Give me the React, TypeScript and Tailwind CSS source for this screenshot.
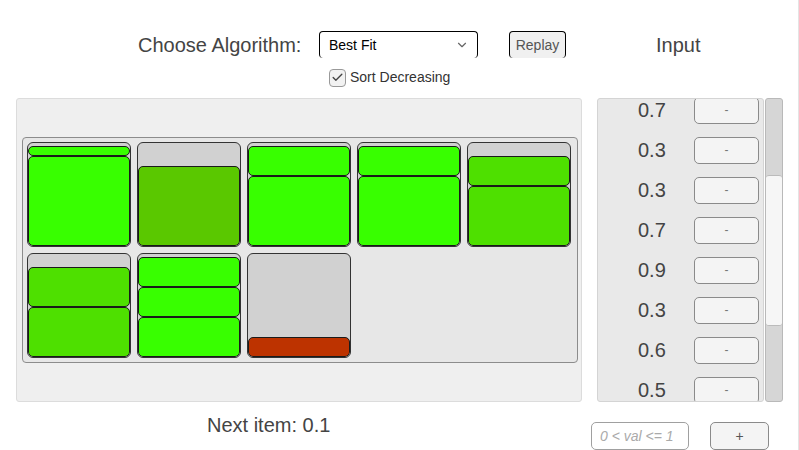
import React from 'react';
import { ChevronDown, Check } from 'lucide-react';

type Bin = number[];

const bins: Bin[] = [
    [0.9, 0.1],
    [0.8],
    [0.7, 0.3],
    [0.7, 0.3],
    [0.6, 0.3],
    [0.5, 0.4],
    [0.4, 0.3, 0.3],
    [0.2],
];

const inputs = [0.7, 0.3, 0.3, 0.7, 0.9, 0.3, 0.6, 0.5];

// colour of a bin's items depends on how full it is
const fillColor = (total: number) => {
    if (total >= 0.99) return 'bg-[#38ff00]';
    if (total >= 0.89) return 'bg-[#4ee000]';
    if (total >= 0.79) return 'bg-[#5ac800]';
    return 'bg-[#bd3300]';
};

const BinView: React.FC<{ items: Bin }> = ({ items }) => {
    const total = items.reduce((a, b) => a + b, 0);
    const color = fillColor(total);
    return (
        <div className="h-[105px] w-[104px] rounded-[6px] border border-[#333] bg-[#d1d1d1] flex flex-col-reverse overflow-hidden">
            {items.map((v, i) => (
                <div
                    key={i}
                    className={`${color} w-full rounded-[5px] border border-[#1a1a1a]`}
                    style={{ height: `${Math.round(v * 100)}px` }}
                />
            ))}
        </div>
    );
};

export default function App() {
    return (
        <div className="w-[799px] h-[450px] bg-white overflow-hidden text-[#444] border-r border-[#e4e4e4]" style={{ fontFamily: '"Liberation Sans", Arial, sans-serif' }}>
            {/* header */}
            <div className="flex items-start pt-[31px] h-[98px]">
                <div className="ml-[138px] w-[181px] h-[27px] flex items-center text-[20px] text-[#444]">Choose Algorithm:</div>
                <div className="flex flex-col">
                    <div className="w-[159px] h-[27px] rounded-[4px] border-x border-t border-black border-b-white flex items-center justify-between pl-[9px] pr-[8px] text-[14px] text-black">
                        <span>Best Fit</span>
                        <ChevronDown size={14} className="text-[#666]" />
                    </div>
                    <div className="flex items-center mt-[9px] ml-[10px]">
                        <div className="w-[17px] h-[18px] rounded-[4px] border border-[#999] bg-[#f2f2f2] flex items-center justify-center">
                            <Check size={13} strokeWidth={2.5} className="text-[#444]" />
                        </div>
                        <span className="ml-[4px] text-[14px] text-[#333]">Sort Decreasing</span>
                    </div>
                </div>
                <div className="ml-[31px] w-[57px] h-[27px] rounded-[4px] border-x border-t border-black border-b-white bg-[#f0f0f0] flex items-center justify-center text-[14px] text-[#555]">Replay</div>
                <div className="ml-[90px] h-[27px] flex items-center text-[20px] text-[#444]">Input</div>
            </div>

            {/* main */}
            <div className="flex h-[304px]">
                <div className="ml-[16px] w-[566px] h-[304px] rounded-[3px] border border-[#dcdcdc] bg-[#efefef] pt-[38px] pl-[5px]">
                    <div className="w-[556px] h-[226px] rounded-[4px] border border-[#8c8c8c] bg-[#e7e7e7] p-[4px]">
                        <div className="grid grid-cols-[repeat(5,104px)] gap-[6px]">
                            {bins.map((b, i) => (
                                <BinView key={i} items={b} />
                            ))}
                        </div>
                    </div>
                </div>

                <div className="ml-[15px] w-[167px] h-[304px] rounded-[3px] border border-[#d4d4d4] bg-[#e9e9e9] overflow-hidden">
                    <div className="mt-[-9px]">
                        {inputs.map((v, i) => (
                            <div key={i} className="h-[40px] flex items-center">
                                <span className="ml-[40px] w-[56px] text-[20px] text-[#444]">{v}</span>
                                <div className="w-[65px] h-[27px] rounded-[5px] border border-[#8a8a8a] bg-[#f4f4f4] flex items-center justify-center text-[12px] text-[#777]">-</div>
                            </div>
                        ))}
                    </div>
                </div>

                <div className="ml-[1px] w-[18px] h-[304px] rounded-[3px] border border-[#b9b9b9] bg-[#d6d6d6] pt-[76px]">
                    <div className="w-full h-[151px] rounded-[3px] border-y border-[#bbb] bg-[#f6f6f6]" />
                </div>
            </div>

            {/* footer */}
            <div className="flex items-start mt-[20px] h-[28px]">
                <div className="ml-[207px] w-[384px] h-[23px] leading-[23px] mt-[-8px] text-[20px] text-[#444]">Next item: 0.1</div>
                <div className="w-[98px] h-[28px] rounded-[5px] border border-[#a0a0a0] bg-white flex items-center pl-[8px] text-[14px] italic text-[#aaa]">0 &lt; val &lt;= 1</div>
                <div className="ml-[21px] w-[59px] h-[28px] rounded-[5px] border border-[#8a8a8a] bg-[#f4f4f4] flex items-center justify-center text-[14px] text-[#555]">+</div>
            </div>
        </div>
    );
}
